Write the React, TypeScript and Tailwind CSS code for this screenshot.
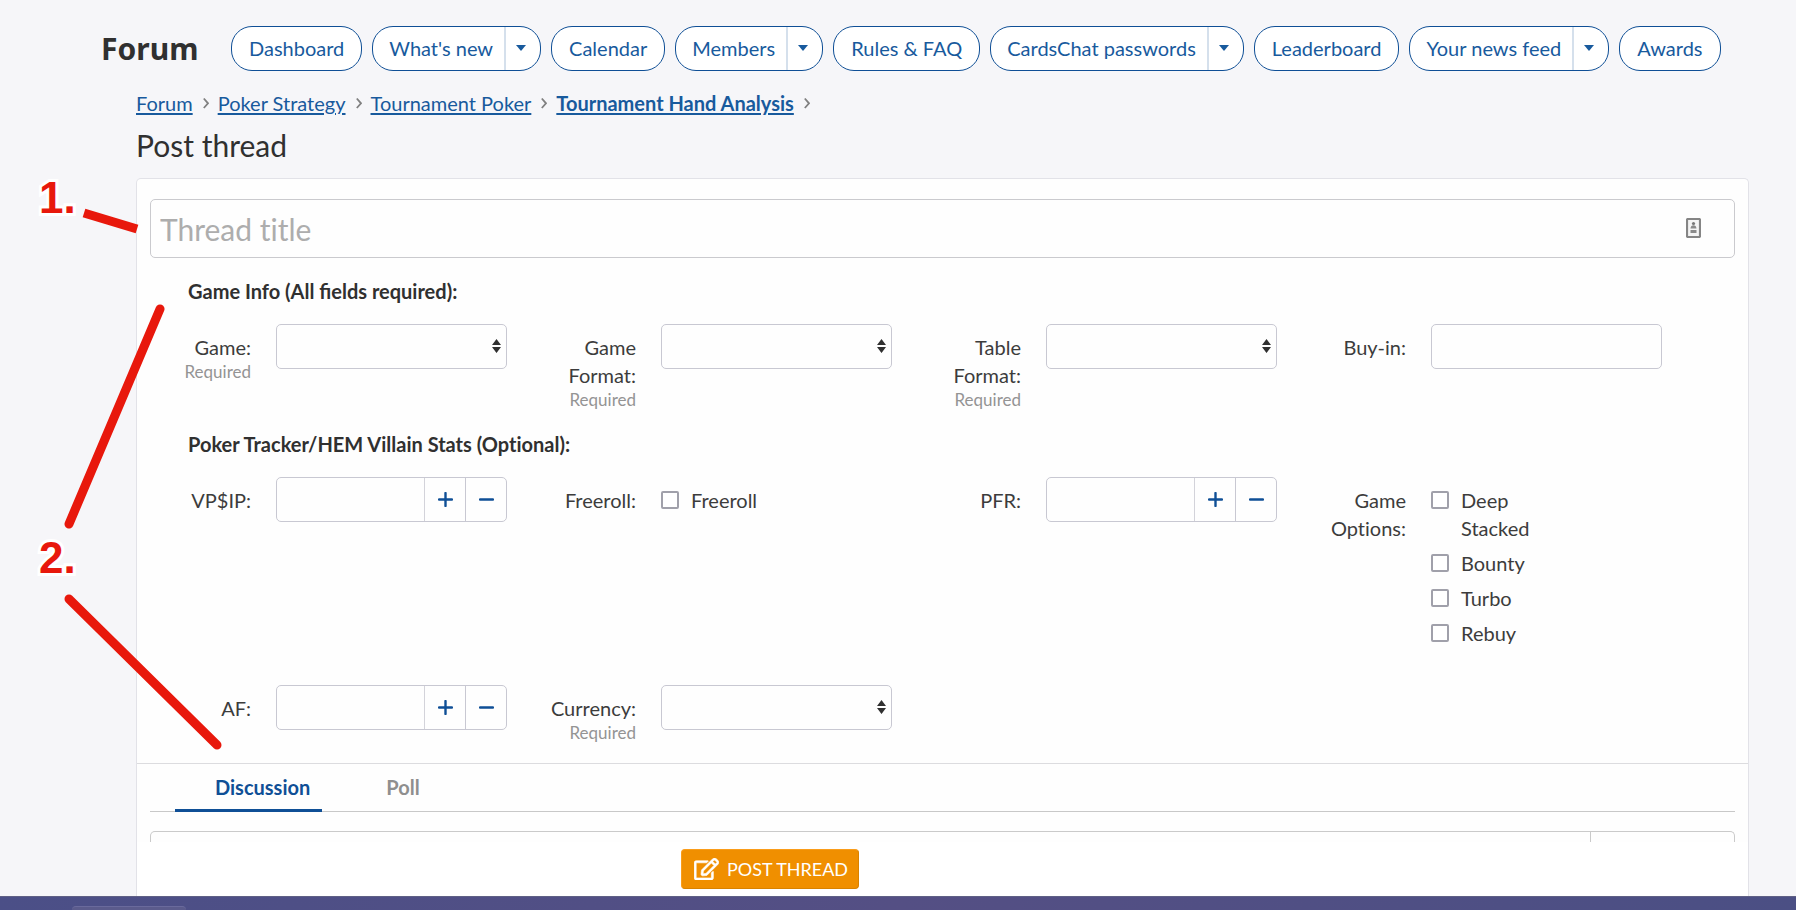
import { useState } from 'react';
import type { ReactNode } from 'react';

interface NavItem {
  label: string;
  menu?: boolean;
}

const NAV_ITEMS: NavItem[] = [
  { label: 'Dashboard' },
  { label: "What's new", menu: true },
  { label: 'Calendar' },
  { label: 'Members', menu: true },
  { label: 'Rules & FAQ' },
  { label: 'CardsChat passwords', menu: true },
  { label: 'Leaderboard' },
  { label: 'Your news feed', menu: true },
  { label: 'Awards' },
];

const CRUMBS = ['Forum', 'Poker Strategy', 'Tournament Poker', 'Tournament Hand Analysis'];

const GAME_OPTIONS = ['Deep Stacked', 'Bounty', 'Turbo', 'Rebuy'];

function NavPill({ item }: { item: NavItem }) {
  return (
    <li className="flex h-[45px] shrink-0 items-stretch overflow-hidden rounded-[21px] border border-[#0f4f96] bg-white text-[#185a9d]">
      <a href="#" className={`flex items-center pb-[2px] ${item.menu ? 'pr-[11px] pl-4' : 'px-[17px]'}`}>
        {item.label}
      </a>
      {item.menu && (
        <button
          type="button"
          aria-label={`${item.label} menu`}
          className="flex w-9 items-center justify-center border-l-2 border-[#d5e0ec] pr-1 pb-[2px]"
        >
          <svg width="10" height="6" viewBox="0 0 10 6" fill="currentColor" aria-hidden="true">
            <path d="M0 0h10L5 6z" />
          </svg>
        </button>
      )}
    </li>
  );
}

// Label column on the left, control on the right
function Field({ label, id, required, children }: { label: string; id?: string; required?: boolean; children: ReactNode }) {
  return (
    <div className="flex">
      <div className="w-[125px] shrink-0 px-3 pt-[9px] text-right">
        {id ? <label htmlFor={id} className="block">{label}</label> : <div>{label}</div>}
        {required && <div className="text-[17px] leading-[21px] text-[#949494]">Required</div>}
      </div>
      <div className="min-w-0 flex-1 pr-4 pl-[13px]">{children}</div>
    </div>
  );
}

function SelectBox({ id }: { id: string }) {
  return (
    <div className="relative">
      <select id={id} className="block h-[45px] w-full appearance-none rounded-[5px] border border-[#c8c8d2] bg-transparent px-2">
        <option value=""></option>
      </select>
      <svg
        className="pointer-events-none absolute top-[15px] right-[6px]"
        width="9"
        height="14"
        viewBox="0 0 9 14"
        fill="#303030"
        aria-hidden="true"
      >
        <path d="M4.500 0 9 6H0zM0 8h9l-4.500 6z" />
      </svg>
    </div>
  );
}

function NumberBox({ id }: { id: string }) {
  const [value, setValue] = useState('');
  const step = (by: number) => setValue(String(Math.max(0, Number(value || 0) + by)));

  return (
    <div className="flex h-[45px] overflow-hidden rounded-[5px] border border-[#c8c8d2] text-[#0f4f96]">
      <input
        id={id}
        type="text"
        inputMode="numeric"
        value={value}
        onChange={(e) => setValue(e.target.value)}
        className="w-full min-w-0 flex-1 bg-transparent px-2 text-[#303030]"
      />
      <button type="button" aria-label="Increase" onClick={() => step(1)} className="flex w-[41px] items-center justify-center border-l border-[#d3d3da]">
        <svg width="15" height="15" viewBox="0 0 15 15" stroke="currentColor" strokeWidth="2.400" strokeLinecap="round" aria-hidden="true">
          <path d="M1 7.500h13M7.500 1v13" />
        </svg>
      </button>
      <button type="button" aria-label="Decrease" onClick={() => step(-1)} className="flex w-[41px] items-center justify-center border-l border-[#c8c8d2]">
        <svg width="15" height="15" viewBox="0 0 15 15" stroke="currentColor" strokeWidth="2.400" strokeLinecap="round" aria-hidden="true">
          <path d="M1 7.500h13" />
        </svg>
      </button>
    </div>
  );
}

function CheckRow({ label }: { label: string }) {
  return (
    <label className="flex w-[110px] items-start gap-3">
      <input
        type="checkbox"
        className="mt-[5px] h-[18px] w-[18px] shrink-0 appearance-none rounded-[2px] border-2 border-[#a0a0aa] bg-white checked:bg-[#0f4f96]"
      />
      {label}
    </label>
  );
}

// Red numbered markers and pointer lines drawn over the form
function Markers() {
  const number =
    'absolute left-[39px] font-["Liberation_Sans",sans-serif] text-[44px] leading-[46px] font-bold text-[#e8180c] [-webkit-text-stroke:6px_white] [paint-order:stroke_fill]';
  return (
    <div className="pointer-events-none absolute inset-0 overflow-hidden">
      <span className={`${number} top-[175px]`}>1.</span>
      <span className={`${number} top-[535px]`}>2.</span>
      <svg className="absolute top-0 left-0" width="260" height="780" fill="none" stroke="#e8180c" strokeWidth="9" aria-hidden="true">
        <path d="M84 213l53 16" />
        <path d="M160 309L69 524M69 599l148 146" strokeLinecap="round" />
      </svg>
    </div>
  );
}

export default function App() {
  const [tab, setTab] = useState('Discussion');

  return (
    <div className="relative flex h-screen flex-col overflow-hidden bg-[#f6f6f9] font-[Lato,sans-serif] text-[20px] leading-7 text-[#3c3c3c]">
      <header className="flex items-center pt-[26px] pl-[101px]">
        <span className="w-[130px] shrink-0 font-['Noto_Sans',sans-serif] text-[30px] font-bold text-[#303030]">Forum</span>
        <nav>
          <ul className="flex gap-[10px]">
            {NAV_ITEMS.map((item) => (
              <NavPill key={item.label} item={item} />
            ))}
          </ul>
        </nav>
      </header>

      <div className="flex min-h-0 flex-1 flex-col pr-[47px] pl-[136px]">
        <nav aria-label="Breadcrumb" className="mt-[18px]">
          <ol className="flex">
            {CRUMBS.map((crumb, i) => (
              <li key={crumb} className="flex items-center">
                <a
                  href="#"
                  className={`text-[#185a9d] underline decoration-2 underline-offset-2 ${i === CRUMBS.length - 1 ? 'font-bold' : ''}`}
                >
                  {crumb}
                </a>
                <svg className="mr-[9px] ml-[10px]" width="6" height="12" viewBox="0 0 6 12" fill="none" stroke="#808080" strokeWidth="1.800" aria-hidden="true">
                  <path d="M.8 1.500 5 6.300.8 11" />
                </svg>
              </li>
            ))}
          </ol>
        </nav>
        <h1 className="mt-[7px] text-[30px] leading-[42px] text-[#303030]">Post thread</h1>

        <form className="mt-3 flex min-h-0 flex-1 flex-col rounded-t-[5px] border border-b-0 border-[#e2e2e8] bg-[#fefefe]" onSubmit={(e) => e.preventDefault()}>
          <div className="relative mx-[13px] mt-5">
            <input
              type="text"
              aria-label="Thread title"
              placeholder="Thread title"
              className="block h-[59px] w-full rounded-[5px] border border-[#cacace] bg-transparent px-[9px] text-[30px] text-[#303030] [font-variant-ligatures:none] placeholder:text-[#adadad]"
            />
            <svg className="absolute top-[19px] right-[34px]" width="15" height="20" viewBox="0 0 15 20" aria-hidden="true">
              <rect x="1" y="1" width="13" height="18" rx="1" fill="#f4f4f4" stroke="#858585" strokeWidth="2.200" />
              <circle cx="7.500" cy="5.500" r="1.600" fill="#777" />
              <path d="M4.500 10.500c0-4.500 6-4.500 6 0zM4.500 12h6v3h-6z" fill="#8a8a8a" />
            </svg>
          </div>

          <h2 className="mt-[19px] ml-[51px] font-bold text-[#303030]">Game Info (All fields required):</h2>
          <div className="mt-[19px] mr-[70px] ml-px grid grid-cols-4">
            <Field label="Game:" id="game" required>
              <SelectBox id="game" />
            </Field>
            <Field label="Game Format:" id="game-format" required>
              <SelectBox id="game-format" />
            </Field>
            <Field label="Table Format:" id="table-format" required>
              <SelectBox id="table-format" />
            </Field>
            <Field label="Buy-in:" id="buy-in">
              <input id="buy-in" type="text" className="block h-[45px] w-full rounded-[5px] border border-[#c8c8d2] bg-transparent px-2" />
            </Field>
          </div>

          <h2 className="mt-5 ml-[51px] font-bold text-[#303030] [font-variant-ligatures:none]">
            Poker Tracker/HEM Villain Stats (Optional):
          </h2>
          <div className="mt-[19px] mr-[70px] ml-px grid grid-cols-4 gap-y-[38px] [font-variant-ligatures:none]">
            <Field label="VP$IP:" id="vpip">
              <NumberBox id="vpip" />
            </Field>
            <Field label="Freeroll:">
              <div className="pt-[9px]">
                <CheckRow label="Freeroll" />
              </div>
            </Field>
            <Field label="PFR:" id="pfr">
              <NumberBox id="pfr" />
            </Field>
            <Field label="Game Options:">
              <div className="flex flex-col gap-[7px] pt-[9px]">
                {GAME_OPTIONS.map((option) => (
                  <CheckRow key={option} label={option} />
                ))}
              </div>
            </Field>
            <Field label="AF:" id="af">
              <NumberBox id="af" />
            </Field>
            <Field label="Currency:" id="currency" required>
              <SelectBox id="currency" />
            </Field>
          </div>

          <div className="mt-5 border-t border-[#dcdcdf] px-[13px]">
            <div role="tablist" className="flex border-b border-[#c8c8c8] pl-[25px]">
              {['Discussion', 'Poll'].map((name) => (
                <button
                  key={name}
                  type="button"
                  role="tab"
                  aria-selected={tab === name}
                  onClick={() => setTab(name)}
                  className={`-mb-px h-12 border-b-3 pr-3 pl-10 font-bold ${
                    tab === name ? 'border-[#0f4f96] text-[#0f4f96]' : 'ml-6 border-transparent text-[#8f8f8f]'
                  }`}
                >
                  {name}
                </button>
              ))}
            </div>
            <div className="mt-[19px] flex h-[11px] justify-end rounded-t-[5px] border border-b-0 border-[#cacaca]">
              <div className="w-36 border-l border-[#cacaca]" />
            </div>
          </div>

          <div className="flex flex-1 items-start bg-white pt-[7px] pl-[544px]">
            <button
              type="submit"
              className="flex h-10 items-center gap-2 rounded-[4px] border border-[#fa9d1a] border-r-[#d98200] border-b-[#d98200] bg-[#f08f00] pr-[10px] pl-3 text-[18px] text-white"
            >
              <svg width="25" height="22" viewBox="0 0 576 512" fill="currentColor" stroke="currentColor" strokeWidth="14" aria-hidden="true">
                <path d="M402.300 344.900l32-32c5-5 13.700-1.500 13.700 5.700V464c0 26.500-21.500 48-48 48H48c-26.500 0-48-21.500-48-48V112c0-26.500 21.500-48 48-48h273.500c7.100 0 10.700 8.600 5.700 13.700l-32 32c-1.500 1.500-3.500 2.300-5.700 2.300H48v352h352V350.500c0-2.100.8-4.100 2.300-5.600zm156.600-201.800L296.300 405.700l-90.400 10c-26.200 2.900-48.500-19.200-45.600-45.600l10-90.400L432.900 17.100c22.900-22.900 59.900-22.900 82.700 0l43.200 43.200c22.900 22.900 22.900 60 .1 82.800zM460.100 174L402 115.900 216.200 301.800l-7.300 65.300 65.300-7.300L460.100 174zm64.800-79.700l-43.200-43.200c-4.100-4.100-10.800-4.100-14.800 0L436 82l58.100 58.100 30.900-30.900c4-4.200 4-10.800-.1-14.900z" />
              </svg>
              POST THREAD
            </button>
          </div>
        </form>
      </div>

      <footer className="flex h-[14px] items-end border-t border-[#5f6085] bg-linear-to-r from-[#4b4f87] via-[#544f84] to-[#4b4f84] pl-[72px]">
        <div className="h-1 w-[114px] rounded-t-[4px] border-t border-[#6a6a9c] bg-[#5b5b8c]" />
      </footer>

      <Markers />
    </div>
  );
}
